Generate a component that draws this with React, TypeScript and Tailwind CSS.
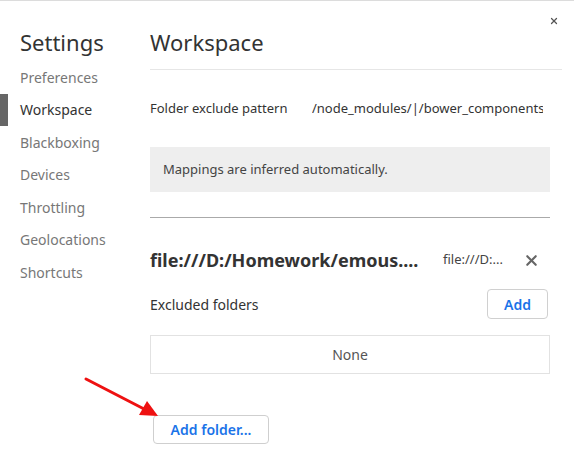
import { X } from "lucide-react";

const navItems = [
  "Preferences",
  "Workspace",
  "Blackboxing",
  "Devices",
  "Throttling",
  "Geolocations",
  "Shortcuts",
];

function Sidebar() {
  return (
    <aside className="w-[150px] shrink-0">
      <h1 className="pl-5 pt-[25px] text-[22px] leading-[32px] text-[#333]">Settings</h1>
      <nav className="mt-[3px]">
        {navItems.map((item) => {
          const active = item === "Workspace";
          return (
            <div
              key={item}
              className={
                active
                  ? "flex h-[32.5px] items-center border-l-[8px] border-[#666] pl-3 text-[14px] text-[#333]"
                  : "flex h-[32.5px] items-center pl-5 text-[14px] text-[#777]"
              }
            >
              {item}
            </div>
          );
        })}
      </nav>
    </aside>
  );
}

function Workspace() {
  return (
    <main className="flex-1 pr-3">
      <div className="border-b border-[#e6e6e6] pb-[11px] pt-[25px]">
        <h2 className="text-[22px] leading-[32px] text-[#333]">Workspace</h2>
      </div>

      <div className="w-[400px]">
        {/* exclude pattern */}
        <div className="mt-[28px] flex h-[22px] items-center text-[13px] text-[#333]">
          <span className="w-[162px] shrink-0">Folder exclude pattern</span>
          <span className="w-[231px] overflow-hidden whitespace-nowrap">/node_modules/|/bower_components/</span>
        </div>

        <div className="mt-[27px] flex h-[45px] items-center bg-[#eeeeee] px-[13px] text-[13px] text-[#444]">
          Mappings are inferred automatically.
        </div>

        <div className="mt-[25px] border-t border-[#aaaaaa]" />

        {/* folder row */}
        <div className="mt-[28px] flex h-[28px] items-center">
          <span className="w-[293px] shrink-0 whitespace-nowrap text-[18px] font-bold text-[#333]">
            file:///D:/Homework/emous....
          </span>
          <span className="w-[80px] shrink-0 text-[13px] text-[#444]">file:///D:...</span>
          <X className="h-[17px] w-[17px] text-[#666]" strokeWidth={3} />
        </div>

        <div className="mt-[15px] flex items-center justify-between">
          <span className="text-[14px] text-[#333]">Excluded folders</span>
          <button className="mr-[2px] h-[30px] w-[61px] rounded-[4px] border border-[#d0d0d0] text-[14px] font-semibold text-[#1a73e8]">
            Add
          </button>
        </div>

        <div className="mt-[16px] flex h-[39px] items-center justify-center border border-[#e2e2e2] text-[14px] text-[#555]">
          None
        </div>

        <button className="ml-[3px] mt-[41px] h-[29px] w-[116px] rounded-[4px] border border-[#cfcfcf] text-[14px] font-semibold text-[#1a73e8]">
          Add folder...
        </button>
      </div>
    </main>
  );
}

export default function App() {
  return (
    <div
      className="relative flex h-[454px] w-[574px] overflow-hidden border-t border-[#dcdcdc] bg-white"
      style={{ fontFamily: '"Noto Sans", "Open Sans", sans-serif' }}
    >
      <Sidebar />
      <Workspace />

      {/* close */}
      <X className="absolute left-[549px] top-[15px] h-[10px] w-[10px] text-[#555]" strokeWidth={3} />

      {/* annotation arrow */}
      <svg className="absolute left-0 top-0" width="574" height="454" viewBox="0 0 574 454">
        <line x1="86" y1="378" x2="146" y2="409" stroke="#ee1111" strokeWidth="3" strokeLinecap="round" />
        <polygon points="158,415 139,414 147,400" fill="#ee1111" />
      </svg>
    </div>
  );
}
